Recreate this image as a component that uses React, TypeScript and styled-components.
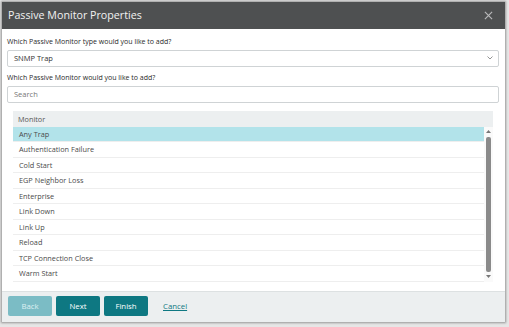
import React from "react";
import styled, { createGlobalStyle } from "styled-components";

const Global = createGlobalStyle`
  html, body { margin: 0; padding: 0; }
  body {
    background: #e6e6e6;
    font-family: "Open Sans", "Liberation Sans", sans-serif;
    width: 509px; height: 327px; overflow: hidden;
  }
  * { box-sizing: border-box; }
`;

const Page = styled.div`
  padding: 2px 4px 0 2px;
`;

const Dialog = styled.div`
  width: 503px;
  height: 320px;
  background: #fff;
  display: flex;
  flex-direction: column;
  box-shadow: 0 0 2px 1px rgba(0,0,0,0.35);
`;

const Header = styled.div`
  height: 27px;
  background: #4e5051;
  display: flex;
  align-items: center;
  justify-content: space-between;
  padding: 0 12px 0 6px;
  color: #f2f2f2;
  font-size: 10.7px;
`;

const Close = styled.span`
  color: #b8b9ba;
  display: flex;
`;

const Body = styled.div`
  flex: 1;
  display: flex;
  flex-direction: column;
  padding: 6px 6px 0 5px;
`;

const Label = styled.div`
  font-size: 7px;
  font-weight: 500;
  color: #2a2a2a;
  height: 14px;
  line-height: 14px;
  margin-bottom: 1px;
`;

const Field = styled.div<{ $muted?: boolean }>`
  height: 17px;
  border: 1px solid #cfd3d5;
  border-radius: 2px;
  display: flex;
  align-items: center;
  justify-content: space-between;
  padding: 0 5px 0 6px;
  font-size: 7.5px;
  font-weight: 500;
  color: ${(p) => (p.$muted ? "#777" : "#333")};
  margin-bottom: 4px;
`;

const Table = styled.div`
  margin: 4px 6px 0 6px;
  display: flex;
  flex-direction: column;
`;

const TableHead = styled.div`
  height: 16px;
  background: #eceff0;
  display: flex;
  align-items: center;
  padding-left: 5px;
  font-size: 7.3px;
  font-weight: 500;
  color: #555;
`;

const TableBody = styled.div`
  display: flex;
  height: 164px;
`;

const Rows = styled.div`
  flex: 1;
  display: flex;
  flex-direction: column;
`;

const Row = styled.div<{ $selected?: boolean }>`
  height: 15.5px;
  display: flex;
  align-items: center;
  padding-left: 6px;
  font-size: 7.3px;
  font-weight: 500;
  color: #4a4a4a;
  background: ${(p) => (p.$selected ? "#b2e3ea" : "#fff")};
  border-bottom: 1px solid #eeeeee;
`;

const Scroll = styled.div`
  width: 9px;
  height: 155px;
  display: flex;
  flex-direction: column;
  align-items: center;
  background: #fafafa;
`;

const Arrow = styled.div`
  height: 10px;
  display: flex;
  align-items: center;
  justify-content: center;
`;

const Thumb = styled.div`
  width: 5px;
  flex: 1;
  background: #8a8a8a;
  border-radius: 2px;
`;

const Footer = styled.div`
  height: 32px;
  border-top: 1px solid #dde1e2;
  background: #eceff0;
  display: flex;
  align-items: flex-start;
  padding: 4px 0 0 6px;
  gap: 4px;
`;

const Button = styled.button<{ $disabled?: boolean }>`
  height: 20px;
  width: 44px;
  border: none;
  border-radius: 2px;
  background: ${(p) => (p.$disabled ? "#7bbcc5" : "#0e7882")};
  color: ${(p) => (p.$disabled ? "#dff0f2" : "#fff")};
  font-family: "Open Sans", "Liberation Sans", sans-serif;
  font-size: 7.8px;
  font-weight: 500;
  padding: 0;
`;

const Link = styled.a`
  margin-left: 11px;
  height: 20px;
  display: flex;
  align-items: center;
  font-size: 7.8px;
  font-weight: 500;
  color: #0e7882;
  text-decoration: underline;
`;

const items = [
  "Any Trap",
  "Authentication Failure",
  "Cold Start",
  "EGP Neighbor Loss",
  "Enterprise",
  "Link Down",
  "Link Up",
  "Reload",
  "TCP Connection Close",
  "Warm Start",
];

export default function App() {
  return (
    <Page>
      <Global />
      <Dialog>
        <Header>
          <span>Passive Monitor Properties</span>
          <Close>
            <svg width="9" height="9" viewBox="0 0 10 10">
              <path d="M1 1L9 9M9 1L1 9" stroke="currentColor" strokeWidth="1.3" />
            </svg>
          </Close>
        </Header>
        <Body>
          <Label>Which Passive Monitor type would you like to add?</Label>
          <Field>
            <span>SNMP Trap</span>
            <svg width="6" height="4" viewBox="0 0 6 4">
              <path d="M0.5 0.5L3 3L5.5 0.5" stroke="#888" strokeWidth="0.9" fill="none" />
            </svg>
          </Field>
          <Label>Which Passive Monitor would you like to add?</Label>
          <Field $muted>
            <span>Search</span>
          </Field>
          <Table>
            <TableHead>Monitor</TableHead>
            <TableBody>
              <Rows>
                {items.map((it, i) => (
                  <Row key={it} $selected={i === 0}>
                    {it}
                  </Row>
                ))}
              </Rows>
              <Scroll>
                <Arrow>
                  <svg width="5" height="3" viewBox="0 0 5 3">
                    <path d="M0 3L2.5 0L5 3Z" fill="#777" />
                  </svg>
                </Arrow>
                <Thumb />
                <Arrow>
                  <svg width="5" height="3" viewBox="0 0 5 3">
                    <path d="M0 0L2.5 3L5 0Z" fill="#777" />
                  </svg>
                </Arrow>
              </Scroll>
            </TableBody>
          </Table>
        </Body>
        <Footer>
          <Button $disabled>Back</Button>
          <Button>Next</Button>
          <Button>Finish</Button>
          <Link>Cancel</Link>
        </Footer>
      </Dialog>
    </Page>
  );
}
